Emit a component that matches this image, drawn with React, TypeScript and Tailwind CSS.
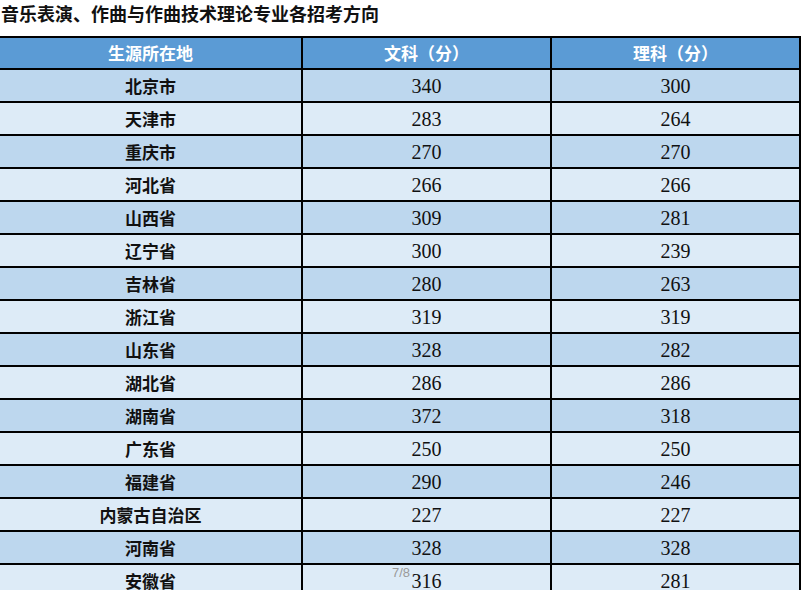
import React from 'react'

const rows: [string, string, string][] = [
  ['北京市', '340', '300'],
  ['天津市', '283', '264'],
  ['重庆市', '270', '270'],
  ['河北省', '266', '266'],
  ['山西省', '309', '281'],
  ['辽宁省', '300', '239'],
  ['吉林省', '280', '263'],
  ['浙江省', '319', '319'],
  ['山东省', '328', '282'],
  ['湖北省', '286', '286'],
  ['湖南省', '372', '318'],
  ['广东省', '250', '250'],
  ['福建省', '290', '246'],
  ['内蒙古自治区', '227', '227'],
  ['河南省', '328', '328'],
  ['安徽省', '316', '281'],
]

const cjk = "font-['Noto_Sans_CJK_SC',sans-serif]"
const num = "font-['Liberation_Serif','DejaVu_Serif',serif]"

const App = () => {
  return (
    <div className="relative w-[803px] h-[590px] overflow-hidden bg-white">
      {/* Title */}
      <div className={`h-[36px] pl-[1px] pt-[2px] text-[18px] leading-[22px] font-bold text-[#111] ${cjk}`}>
        音乐表演、作曲与作曲技术理论专业各招考方向
      </div>

      {/* Table */}
      <div className="w-[801px] border-t-2 border-black">
        <div className="grid grid-cols-[303px_249px_249px] h-[32px] bg-[#5b9bd5] border-b-2 border-black text-white font-bold text-[17px]">
          <div className={`flex items-center justify-center border-r-2 border-black ${cjk}`}>生源所在地</div>
          <div className={`flex items-center justify-center border-r-2 border-black ${cjk}`}>文科（分）</div>
          <div className={`flex items-center justify-center border-r-2 border-black ${cjk}`}>理科（分）</div>
        </div>

        {rows.map(([name, wen, li], i) => (
          <div
            key={name}
            className={`grid grid-cols-[303px_249px_249px] h-[33px] border-b-2 border-black text-[#111] ${
              i % 2 === 0 ? 'bg-[#bdd7ee]' : 'bg-[#ddebf7]'
            }`}
          >
            <div className={`flex items-center justify-center border-r-2 border-black text-[17px] font-semibold ${cjk}`}>
              {name}
            </div>
            <div className={`flex items-center justify-center border-r-2 border-black text-[20px] ${num}`}>{wen}</div>
            <div className={`flex items-center justify-center border-r-2 border-black text-[20px] ${num}`}>{li}</div>
          </div>
        ))}
      </div>

      {/* page indicator */}
      <div className="absolute left-[392px] top-[566px] text-[13px] leading-[14px] text-[#9a9a9a] font-['Liberation_Sans',sans-serif]">
        7/8
      </div>
    </div>
  )
}

export default App
